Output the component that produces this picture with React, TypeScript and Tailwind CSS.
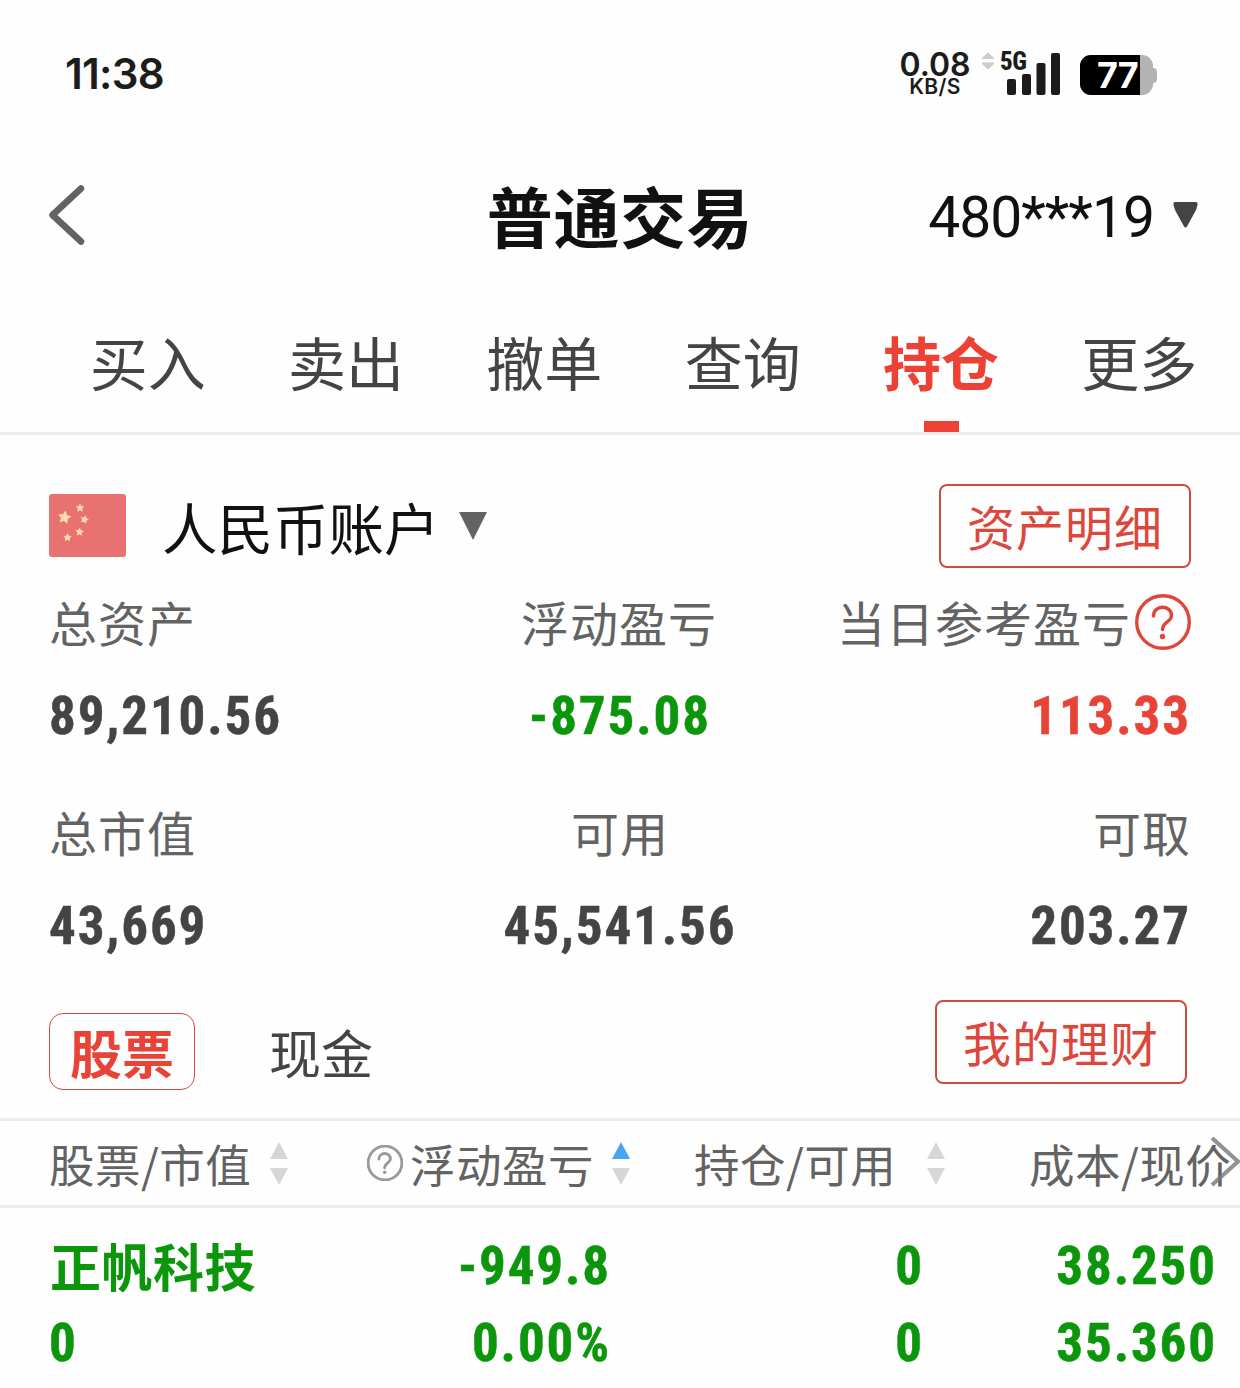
import React from "react";

const CJK = "font-['Noto_Sans_CJK_SC',sans-serif]";
const NUM = "font-['Roboto',sans-serif] font-bold text-[53px] leading-[60px] tracking-[1.9px] [font-stretch:75%]";
const THICK = "[-webkit-text-stroke:0.5px_currentColor]";

const tabs = ["买入", "卖出", "撤单", "查询", "持仓", "更多"];

function SignalBars() {
  return (
    <svg className="block" width="60" height="44" viewBox="0 0 60 44" fill="#1c1c1c">
      <rect x="7" y="27" width="9" height="16" rx="2" />
      <rect x="22" y="22" width="9" height="21" rx="2" />
      <rect x="36.5" y="11" width="9" height="32" rx="2" />
      <rect x="51" y="1" width="9" height="42" rx="2" />
    </svg>
  );
}

function StatusBar() {
  return (
    <div className="flex h-[148px] items-start pl-[65px] pr-[83px] pt-[52px] font-['Inter',sans-serif] text-[#1c1c1c]">
      <div className="mt-[1px] text-[42px] font-semibold leading-[42px] tracking-[-0.7px]">11:38</div>
      <div className="ml-auto flex w-[72px] flex-col items-center whitespace-nowrap">
        <div className="mt-[1px] h-[24px] text-[32px] font-semibold leading-[24px]">0.08</div>
        <div className="mt-[2px] h-[16px] text-[21px] font-semibold leading-[16px] tracking-[0.3px]">KB/S</div>
      </div>
      <svg className="ml-[11px] block" width="12" height="18" viewBox="0 0 12 18" fill="#cccccc">
        <path d="M6 0.500 12 6V7H0V6Z" />
        <path d="M6 17.500 12 12V10.500H0V12Z" />
      </svg>
      <div className="relative ml-[6px]">
        <SignalBars />
        <span className="absolute left-0 top-0 font-['Roboto',sans-serif] text-[25px] font-extrabold leading-[20px] tracking-[-0.500px] [font-stretch:75%]">5G</span>
      </div>
      <div className="ml-[20px] mt-[3px] flex items-center">
        <div className="flex h-[40px] w-[73px] rounded-[11px] bg-[#b3b3b3]">
          <div className="w-[60px] rounded-l-[11px] bg-black pl-[17px] font-['Inter',sans-serif] text-[36px] font-bold leading-[40px] tracking-[-1px] text-white">77</div>
        </div>
        <div className="h-[15px] w-[4px] rounded-r-[4px] bg-[#b3b3b3]" />
      </div>
    </div>
  );
}

function Header() {
  return (
    <div className="grid h-[140px] grid-cols-3 items-center pl-[48px] pr-[42px]">
      <svg className="-mt-[6px] block" width="38" height="62" viewBox="0 0 38 62" fill="none" stroke="#636363" strokeWidth="6.5" strokeLinecap="round" strokeLinejoin="round">
        <path d="M33 4.500 4.500 31 33 57.500" />
      </svg>
      <h1 className={`${CJK} -ml-[6px] -mt-[8px] whitespace-nowrap text-center text-[66px] font-bold leading-[90px] tracking-[0.600px] text-[#111111]`}>普通交易</h1>
      <div className="flex items-center justify-end">
        <span className="font-['Roboto',sans-serif] text-[57px] leading-[60px] tracking-[-1px] text-[#111111]">480***19</span>
        <svg className="-mt-[6px] ml-[19px] block" width="25" height="26" viewBox="0 0 25 26" fill="#444444">
          <path d="M2 0H23Q25 0 24.500 3L23 8 14 24.500Q12.500 26.500 11 24.500L2 8 0.500 3Q0 0 2 0Z" />
        </svg>
      </div>
    </div>
  );
}

function Tabs() {
  return (
    <div className="grid h-[147px] w-[1240px] grid-cols-6 border-b-[3px] border-[#ececec] pl-[49px] pr-[1px]">
      {tabs.map((t) => {
        const on = t === "持仓";
        return (
          <div key={t} className="flex flex-col items-center justify-between">
            <span className={`${CJK} -ml-[1px] mt-[30px] text-[58px] leading-[86px] ${on ? "font-bold text-[#ee4135]" : "text-[#444444]"}`}>{t}</span>
            {on && <i className="block h-[11px] w-[35px] bg-[#ee4135]" />}
          </div>
        );
      })}
    </div>
  );
}

function star(cx: number, cy: number, r: number, rot: number) {
  return Array.from({ length: 10 }, (_, i) => {
    const a = ((i * 36 + rot - 90) * Math.PI) / 180;
    const q = i % 2 ? r * 0.5 : r;
    return `${(cx + q * Math.cos(a)).toFixed(2)},${(cy + q * Math.sin(a)).toFixed(2)}`;
  }).join(" ");
}

function Flag() {
  return (
    <svg className="-mt-[1px] block" width="77" height="63" viewBox="0 0 77 63">
      <rect width="77" height="63" rx="3" fill="#e87272" />
      <g fill="#fddcac">
        <polygon points={star(15.5, 23.5, 7, 10)} />
        <polygon points={star(31, 14, 4.5, 0)} />
        <polygon points={star(35.5, 25.5, 4.5, 15)} />
        <polygon points={star(30.5, 38, 4.5, 5)} />
        <polygon points={star(18.5, 43.5, 4.5, 0)} />
      </g>
    </svg>
  );
}

function Help({ size, color, width }: { size: number; color: string; width: number }) {
  return (
    <svg className="block shrink-0" width={size} height={size} viewBox="0 0 56 56" fill="none" stroke={color} strokeWidth={width} strokeLinecap="round">
      <circle cx="28" cy="28" r="26.3" />
      <path d="M18.500 22C18.500 10.500 36.500 10.500 36.500 21.500C36.500 28 27.500 28 27.500 35.500" />
      <circle cx="27.500" cy="42.500" r="2.700" fill={color} stroke="none" />
    </svg>
  );
}

function OutlineButton({ children }: { children: string }) {
  return (
    <button className={`${CJK} flex h-[84px] w-[252px] items-center justify-center rounded-[8px] border-2 border-[#cf4b41] text-[48px] leading-[80px] tracking-[1px] text-[#dd473b]`}>
      <span className="-mt-[2px]">{children}</span>
    </button>
  );
}

function Label({ children, className = "" }: { children: React.ReactNode; className?: string }) {
  return <div className={`${CJK} flex h-[72px] items-center whitespace-nowrap text-[48px] leading-[72px] tracking-[1px] text-[#636363] ${className}`}>{children}</div>;
}

function Summary() {
  return (
    <div className="pl-[49px] pr-[49px] pt-[49px]">
      <div className="flex h-[84px] items-center">
        <Flag />
        <span className={`${CJK} -mt-[1px] ml-[36px] text-[55.500px] leading-[80px] text-[#111111]`}>人民币账户</span>
        <svg className="-mt-[1px] ml-[19.500px] block" width="28" height="28" viewBox="0 0 28 28" fill="#636363"><path d="M0 0H28L14 28Z" /></svg>
        <div className="ml-auto"><OutlineButton>资产明细</OutlineButton></div>
      </div>
      <div className="mt-[17px] grid grid-cols-3">
        <Label>总资产</Label>
        <Label className="-ml-[2px] justify-center">浮动盈亏</Label>
        <Label className="justify-end"><span className="mr-[4px]">当日参考盈亏</span><span className="mt-[2px]"><Help size={56} color="#e0453a" width={3.4} /></span></Label>
      </div>
      <div className={`mt-[29px] grid grid-cols-3 text-[#444444] ${NUM} ${THICK}`}>
        <div>89,210.56</div>
        <div className="text-center text-[#0b960b]">-875.08</div>
        <div className="text-right text-[#e94337]">113.33</div>
      </div>
      <div className="mt-[49px] grid grid-cols-3">
        <Label>总市值</Label>
        <Label className="justify-center">可用</Label>
        <Label className="justify-end">可取</Label>
      </div>
      <div className={`mt-[29px] grid grid-cols-3 text-[#444444] ${NUM} ${THICK}`}>
        <div>43,669</div>
        <div className="text-center">45,541.56</div>
        <div className="text-right">203.27</div>
      </div>
    </div>
  );
}

function Switcher() {
  return (
    <div className="mt-[44px] flex h-[121px] items-start border-b-[3px] border-[#ececec] pl-[49px] pr-[53px]">
      <div className={`${CJK} mt-[13px] flex h-[77px] w-[146px] items-center justify-center rounded-[14px] border border-[#d9483d] text-[52px] font-bold leading-[76px] text-[#e94337]`}>股票</div>
      <div className={`${CJK} ml-[74px] mt-[14px] text-[52px] leading-[76px] text-[#444444]`}>现金</div>
      <div className="ml-auto"><OutlineButton>我的理财</OutlineButton></div>
    </div>
  );
}

function Sort({ active = false, className = "" }: { active?: boolean; className?: string }) {
  return (
    <svg className={`block shrink-0 ${className}`} width="18" height="43" viewBox="0 0 18 43" fill="#d6d6d6">
      <path d="M9 0 18 17H0Z" fill={active ? "#48a5f5" : "#d6d6d6"} />
      <path d="M9 43 18 26H0Z" />
    </svg>
  );
}

function TableHead() {
  return (
    <div className={`${CJK} relative flex h-[87px] items-center overflow-hidden whitespace-nowrap border-b-[3px] border-[#ececec] pl-[49px] text-[45.500px] leading-[80px] tracking-[0.500px] text-[#636363]`}>
      <div className="flex w-[318px] items-center">
        <span>股票/市值</span>
        <Sort className="mt-[1px] ml-[19px]" />
      </div>
      <div className="flex w-[327px] items-center">
        <div className="mr-[7px]"><Help size={36} color="#999999" width={4.5} /></div>
        <span>浮动盈亏</span>
        <Sort active className="mt-[1px] ml-[18px]" />
      </div>
      <div className="flex w-[335px] items-center">
        <span>持仓/可用</span>
        <Sort className="mt-[1px] ml-[31px]" />
      </div>
      <span>成本/现价</span>
      <svg className="absolute right-0 top-[15px] block" width="30" height="52" viewBox="0 0 30 52" fill="none" stroke="#777777" strokeOpacity="0.8" strokeWidth="4">
        <path d="M2 2 28 25.500 2 49" />
      </svg>
    </div>
  );
}

function Position() {
  return (
    <div className={`grid grid-cols-[300px_262px_313px_293px] pl-[49px] pt-[28px] text-[#0b960b] ${NUM}`}>
      <div className="h-[60px] font-['Noto_Sans_CJK_SC',sans-serif] text-[51px] tracking-[0.5px]">
        <span className="relative -top-[1px] left-[1px]">正帆科技</span>
      </div>
      <div className={`text-right ${THICK}`}>-949.8</div>
      <div className={`text-right ${THICK}`}>0</div>
      <div className={`text-right ${THICK}`}>38.250</div>
      <div className={`mt-[17px] ${THICK}`}>0</div>
      <div className={`mt-[17px] text-right ${THICK}`}>0.00%</div>
      <div className={`mt-[17px] text-right ${THICK}`}>0</div>
      <div className={`mt-[17px] text-right ${THICK}`}>35.360</div>
    </div>
  );
}

export default function App() {
  return (
    <div className="h-[1388px] w-[1240px] overflow-hidden bg-[#fefefe]">
      <StatusBar />
      <Header />
      <Tabs />
      <Summary />
      <Switcher />
      <TableHead />
      <Position />
    </div>
  );
}
